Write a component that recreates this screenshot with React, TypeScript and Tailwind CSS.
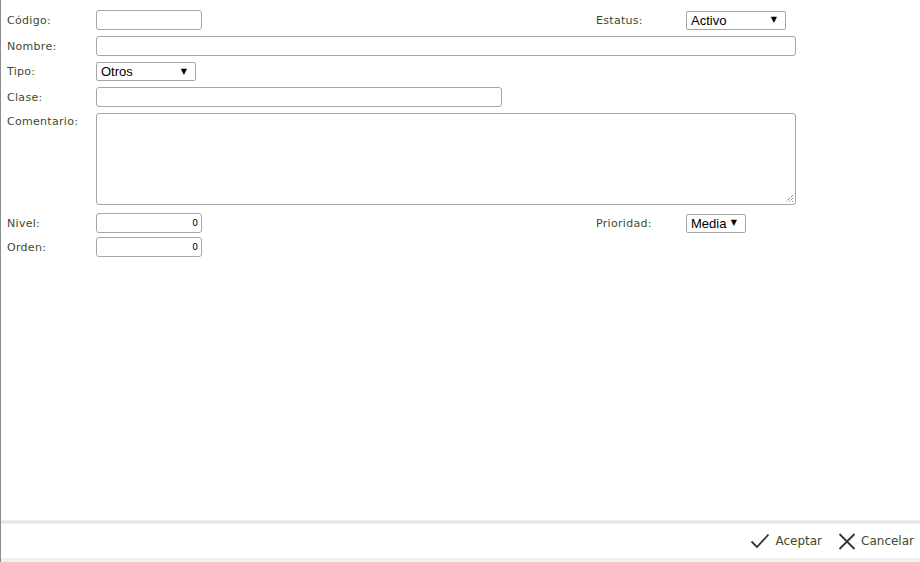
import React from 'react';

const label = "text-[11px] leading-none text-[#3d4a2c] tracking-[0.3px]";
const field = "h-[20px] rounded-[3px] border border-[#a6a6a6] bg-white";

function Select({ value, width }: { value: string; width: string }) {
  return (
    <div
      className={`${width} h-[19px] rounded-[2px] border border-[#a6a6a6] bg-white flex items-center justify-between pl-[4px] pr-[8px]`}
    >
      <span className="text-[13px] leading-none text-black font-['Liberation_Sans',Arial,sans-serif]">{value}</span>
      <span className="text-[8px] leading-none text-black">▼</span>
    </div>
  );
}

function NumberInput() {
  return (
    <div className={`${field} w-[106px] flex items-center justify-end pr-[3px]`}>
      <span className="text-[9px] leading-none text-black pt-[1px]">0</span>
    </div>
  );
}

export default function App() {
  return (
    <div className="w-[920px] h-[562px] flex flex-col bg-white border-l border-[#8c8c8c] font-['DejaVu_Sans',Verdana,sans-serif]">
      {/* Form */}
      <div className="flex-1 pt-[10px]">
        <div className="flex items-center h-[20px]">
          <div className={`w-[95px] pl-[6px] ${label}`}>Código:</div>
          <div className={`${field} w-[106px]`} />
          <div className={`ml-[394px] w-[90px] ${label}`}>Estatus:</div>
          <Select value="Activo" width="w-[100px]" />
        </div>

        <div className="flex items-center h-[20px] mt-[6px]">
          <div className={`w-[95px] pl-[6px] ${label}`}>Nombre:</div>
          <div className={`${field} w-[700px]`} />
        </div>

        <div className="flex items-center h-[19px] mt-[6px]">
          <div className={`w-[95px] pl-[6px] ${label}`}>Tipo:</div>
          <Select value="Otros" width="w-[100px]" />
        </div>

        <div className="flex items-center h-[20px] mt-[6px]">
          <div className={`w-[95px] pl-[6px] ${label}`}>Clase:</div>
          <div className={`${field} w-[406px]`} />
        </div>

        <div className="flex items-start mt-[6px]">
          <div className={`w-[95px] pl-[6px] pt-[3px] ${label}`}>Comentario:</div>
          <div className="relative w-[700px] h-[92px] rounded-[3px] border border-[#a6a6a6] bg-white">
            <svg className="absolute right-[1px] bottom-[1px]" width="9" height="9" viewBox="0 0 9 9">
              <path d="M8 1 L1 8 M8 4 L4 8 M8 7 L7 8" stroke="#555" strokeWidth="1" strokeDasharray="1 1" />
            </svg>
          </div>
        </div>

        <div className="flex items-center h-[20px] mt-[8px]">
          <div className={`w-[95px] pl-[6px] ${label}`}>Nivel:</div>
          <NumberInput />
          <div className={`ml-[394px] w-[90px] ${label}`}>Prioridad:</div>
          <Select value="Media" width="w-[60px]" />
        </div>

        <div className="flex items-center h-[20px] mt-[4px]">
          <div className={`w-[95px] pl-[6px] ${label}`}>Orden:</div>
          <NumberInput />
        </div>
      </div>

      {/* Footer */}
      <div className="h-[4px] bg-gradient-to-b from-[#f7f7f7] via-[#dcdcdc] to-[#f9f9f9]" />
      <div className="h-[34px] flex items-center justify-end pr-[6px] gap-[16px]">
        <button type="button" className="flex items-center gap-[5px]">
          <svg width="20" height="16" viewBox="0 0 20 16">
            <path d="M1.5 8.5 L7 14 L18.5 1.5" fill="none" stroke="#333" strokeWidth="1.8" />
          </svg>
          <span className="text-[12px] leading-none text-[#3d4a2c]">Aceptar</span>
        </button>
        <button type="button" className="flex items-center gap-[5px]">
          <svg width="18" height="17" viewBox="0 0 18 17">
            <path d="M1.5 1 L16.5 16 M16.5 1 L1.5 16" fill="none" stroke="#333" strokeWidth="1.8" />
          </svg>
          <span className="text-[12px] leading-none text-[#3d4a2c]">Cancelar</span>
        </button>
      </div>
      <div className="h-[4px] bg-[#eef1f4]" />
    </div>
  );
}
